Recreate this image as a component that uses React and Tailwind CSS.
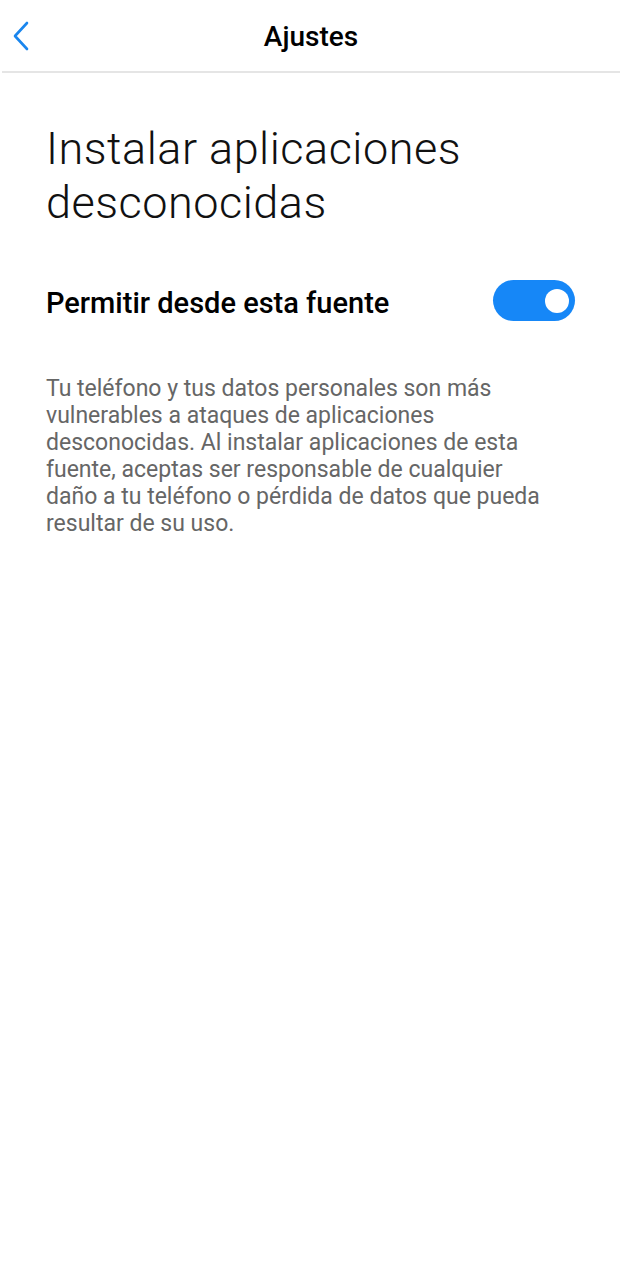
import { useState } from "react";

export default function App() {
  const [allowed, setAllowed] = useState(true);

  return (
    <div
      className="min-h-[1280px] w-[620px] bg-white"
      style={{ fontFamily: "Roboto, 'Noto Sans', sans-serif" }}
    >
      {/* Top bar */}
      <header className="relative ml-[2px] flex h-[73px] items-center justify-center border-b-2 border-[#e5e5e5]">
        <button className="absolute left-[9px] top-[20px] flex h-[32px] w-[20px] items-center justify-center">
          <svg width="16" height="30" viewBox="0 0 16 30" fill="none">
            <path
              d="M14 2 L2 15 L14 28"
              stroke="#1a86ee"
              strokeWidth="2.6"
              strokeLinecap="round"
              strokeLinejoin="round"
            />
          </svg>
        </button>
        <h1 className="mt-[2px] text-[28px] font-medium leading-none text-black">
          Ajustes
        </h1>
      </header>

      <main className="px-[46px]">
        <h2 className="mt-[49px] text-[45px] font-light leading-[54px] tracking-[0.5px] text-[#111]">
          Instalar aplicaciones desconocidas
        </h2>

        {/* Toggle row */}
        <div className="mt-[50px] flex items-center justify-between">
          <span className="pt-[5px] text-[29px] font-medium leading-[34px] text-black">
            Permitir desde esta fuente
          </span>
          <button
            onClick={() => setAllowed(!allowed)}
            className={`-mr-[1px] flex h-[41px] w-[82px] items-center rounded-full px-[6px] ${
              allowed ? "justify-end bg-[#1687f7]" : "justify-start bg-gray-300"
            }`}
          >
            <span className="h-[24px] w-[24px] rounded-full bg-white" />
          </button>
        </div>

        <p className="mt-[54px] w-[505px] text-[23px] leading-[27px] text-[#666]">
          Tu teléfono y tus datos personales son más vulnerables a ataques de
          aplicaciones desconocidas. Al instalar aplicaciones de esta fuente,
          aceptas ser responsable de cualquier daño a tu teléfono o pérdida de
          datos que pueda resultar de su uso.
        </p>
      </main>
    </div>
  );
}
